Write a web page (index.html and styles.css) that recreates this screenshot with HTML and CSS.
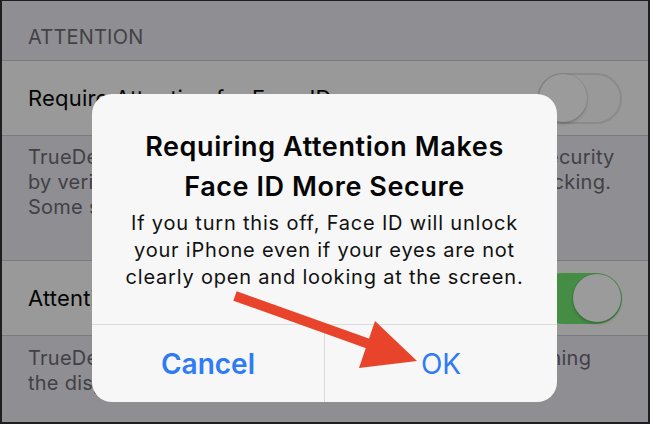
FILE: index.html
```html
<!DOCTYPE html>
<html lang="en">
<head>
<meta charset="utf-8">
<title>Face ID Attention</title>
<link rel="stylesheet" href="styles.css">
</head>
<body>
<div class="screen">
  <div class="section-header">ATTENTION</div>
  <div class="cell">
    <span class="cell-label">Require Attention for Face ID</span>
    <span class="toggle toggle-off"><span class="knob"></span></span>
  </div>
  <div class="footer footer-first">TrueDepth camera will provide an additional level of security<br>by verifying that you are looking at iPhone before unlocking.<br>Some sunglasses may block attention detection.</div>
  <div class="cell">
    <span class="cell-label">Attention Aware Features</span>
    <span class="toggle toggle-on"><span class="knob"></span></span>
  </div>
  <div class="footer footer-second">TrueDepth camera will check for attention before dimming<br>the display or lowering the volume of alerts.</div>

  <div class="alert">
    <div class="alert-body">
      <div class="alert-title">Requiring Attention Makes<br>Face ID More Secure</div>
      <div class="alert-message">If you turn this off, Face ID will unlock<br>your iPhone even if your eyes are not<br>clearly open and looking at the screen.</div>
    </div>
    <div class="alert-actions">
      <div class="alert-btn alert-btn-cancel">Cancel</div>
      <div class="alert-btn alert-btn-ok">OK</div>
    </div>
  </div>

  <svg class="arrow" width="650" height="424" viewBox="0 0 650 424">
    <line x1="235" y1="296" x2="372" y2="345" stroke="#e8432b" stroke-width="10"/>
    <polygon points="375,321 417,361 359,368" fill="#e8432b"/>
  </svg>
</div>
</body>
</html>
```

FILE: styles.css
```css
html, body {
  margin: 0;
  padding: 0;
  background: #1e1e1e;
}

.screen {
  position: relative;
  width: 650px;
  height: 424px;
  box-sizing: border-box;
  border: 2px solid #1e1e1e;
  border-top-width: 1px;
  background: #8f8e93;
  overflow: hidden;
  font-family: Inter, "Liberation Sans", sans-serif;
  color: #050505;
}

.section-header {
  box-sizing: border-box;
  height: 59px;
  padding: 24px 0 0 26px;
  font-size: 20px;
  line-height: 24px;
  letter-spacing: 0.2px;
  color: #434246;
}

.cell {
  box-sizing: border-box;
  display: flex;
  align-items: center;
  justify-content: space-between;
  padding: 0 26px;
  background: #999999;
  border-top: 1px solid #7b7a7e;
  border-bottom: 1px solid #7b7a7e;
  height: 76px;
}

.cell-label {
  font-size: 22px;
  line-height: 28px;
  letter-spacing: 0.2px;
}

.toggle {
  position: relative;
  box-sizing: border-box;
  width: 85px;
  height: 51px;
  border-radius: 26px;
  display: flex;
  align-items: center;
}

.toggle-off {
  background: #999999;
  border: 2px solid #8a8a8d;
  justify-content: flex-start;
}

.toggle-on {
  background: #458c44;
  justify-content: flex-end;
  padding: 0 1px;
}

.knob {
  width: 48px;
  height: 48px;
  border-radius: 50%;
  background: #9b9b9b;
  box-shadow: 0 2px 3px rgba(0, 0, 0, 0.18), 0 0 0 1px rgba(0, 0, 0, 0.06);
}

.footer {
  box-sizing: border-box;
  padding-left: 26px;
  font-size: 20px;
  line-height: 25px;
  letter-spacing: 0.25px;
  color: #414145;
  white-space: nowrap;
}

.footer-first {
  height: 124px;
  padding-top: 9px;
}

.footer-second {
  padding-top: 10px;
}

.alert {
  position: absolute;
  left: 90px;
  top: 93px;
  width: 465px;
  height: 308px;
  box-sizing: border-box;
  border-radius: 20px;
  background: #f7f7f7;
  display: flex;
  flex-direction: column;
  overflow: hidden;
}

.alert-body {
  flex: 1;
  padding-top: 33px;
  text-align: center;
}

.alert-title {
  font-size: 27px;
  line-height: 40px;
  font-weight: 600;
  letter-spacing: 0.6px;
  color: #050505;
}

.alert-message {
  margin-top: 3px;
  font-size: 20px;
  line-height: 27px;
  letter-spacing: 0.8px;
  color: #111111;
}

.alert-actions {
  display: flex;
  height: 77px;
  border-top: 1px solid #dadadc;
}

.alert-btn {
  flex: 1;
  display: flex;
  align-items: center;
  justify-content: center;
  font-size: 28px;
  color: #2f7bf5;
}

.alert-btn-cancel {
  font-weight: 600;
  border-right: 1px solid #dadadc;
}

.alert-btn-ok {
  font-weight: 400;
}

.arrow {
  position: absolute;
  left: -2px;
  top: -1px;
}
```
